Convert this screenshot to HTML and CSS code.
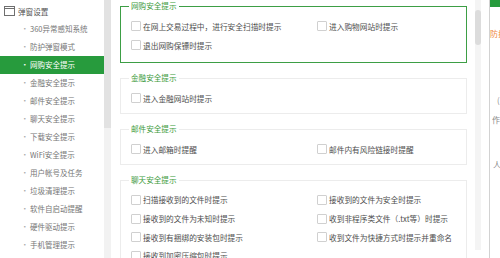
FILE: index.html
```html
<!DOCTYPE html>
<html lang="zh-CN">
<head>
<meta charset="utf-8">
<title>弹窗设置</title>
<link rel="stylesheet" href="styles.css">
</head>
<body>
<div class="app">
  <aside class="sidebar">
    <div class="nav-head">
      <svg class="nav-icon" viewBox="0 0 11 10" width="11" height="10"><rect x="0.5" y="0.5" width="10" height="9" fill="none" stroke="#6f6f6f" stroke-width="1"/><line x1="0.5" y1="2.5" x2="10.5" y2="2.5" stroke="#6f6f6f" stroke-width="1"/></svg>
      <span>弹窗设置</span>
    </div>
    <ul class="nav">
      <li>360异常感知系统</li>
      <li>防护弹窗模式</li>
      <li class="active">网购安全提示</li>
      <li>金融安全提示</li>
      <li>邮件安全提示</li>
      <li>聊天安全提示</li>
      <li>下载安全提示</li>
      <li>WiFi安全提示</li>
      <li>用户帐号及任务</li>
      <li>垃圾清理提示</li>
      <li>软件自启动提醒</li>
      <li>硬件驱动提示</li>
      <li>手机管理提示</li>
    </ul>
  </aside>
  <div class="side-scroll"><div class="side-thumb"></div></div>
  <main class="content">
    <fieldset class="group active">
      <legend>网购安全提示</legend>
      <div class="opts">
        <label class="opt"><span class="cb"></span>在网上交易过程中，进行安全扫描时提示</label>
        <label class="opt"><span class="cb"></span>进入购物网站时提示</label>
        <label class="opt"><span class="cb"></span>退出网购保镖时提示</label>
      </div>
    </fieldset>
    <fieldset class="group">
      <legend>金融安全提示</legend>
      <div class="opts">
        <label class="opt"><span class="cb"></span>进入金融网站时提示</label>
      </div>
    </fieldset>
    <fieldset class="group">
      <legend>邮件安全提示</legend>
      <div class="opts">
        <label class="opt"><span class="cb"></span>进入邮箱时提醒</label>
        <label class="opt"><span class="cb"></span>邮件内有风险链接时提醒</label>
      </div>
    </fieldset>
    <fieldset class="group chat">
      <legend>聊天安全提示</legend>
      <div class="opts">
        <label class="opt"><span class="cb"></span>扫描接收到的文件时提示</label>
        <label class="opt"><span class="cb"></span>接收到的文件为安全时提示</label>
        <label class="opt"><span class="cb"></span>接收到的文件为未知时提示</label>
        <label class="opt"><span class="cb"></span>收到非程序类文件（.txt等）时提示</label>
        <label class="opt"><span class="cb"></span>接收到有捆绑的安装包时提示</label>
        <label class="opt"><span class="cb"></span>收到文件为快捷方式时提示并重命名</label>
        <label class="opt"><span class="cb"></span>接收到加密压缩包时提示</label>
      </div>
    </fieldset>
  </main>
  <div class="main-scroll"><div class="main-thumb"></div></div>
  <div class="gutter"></div>
  <section class="right">
    <div class="right-bar"></div>
    <div class="right-title">防护</div>
    <div class="right-paren">(</div>
    <div class="right-line">作</div>
    <div class="right-line2">人</div>
  </section>
</div>
</body>
</html>
```

FILE: styles.css
```css
* { box-sizing: border-box; }
html, body { margin: 0; padding: 0; }
body {
  width: 500px;
  height: 258px;
  overflow: hidden;
  background: #fff;
  font-family: "Noto Sans CJK SC", "Noto Sans", sans-serif;
}
.app { display: flex; height: 258px; overflow: hidden; }

.sidebar { width: 104px; flex: none; padding-top: 2px; }
.nav-head {
  display: flex;
  align-items: center;
  height: 18px;
  padding-left: 4px;
  gap: 3px;
  font-size: 7.6px;
  color: #555;
}
.nav-icon { flex: none; }
.nav { list-style: none; margin: 0; padding: 0; }
.nav li {
  height: 18px;
  line-height: 18px;
  font-size: 7.5px;
  color: #767676;
  padding-left: 21px;
  white-space: nowrap;
}
.nav li::before {
  content: "·";
  display: inline-block;
  width: 9px;
  color: #aaa;
}
.nav li.active { background: #279b3d; color: #fff; }
.nav li.active::before { color: #fff; }

.side-scroll { width: 7px; flex: none; background: #f2f2f2; }
.side-thumb { height: 128px; background: #e2e2e2; }

.content { width: 364px; flex: none; padding: 0 8px 0 9px; }
.group {
  margin: 0 0 9px;
  padding: 4.5px 10px 5.5px;
  border: 1px solid #ececec;
  min-width: 0;
}
.group.active { border-color: #3d9e45; padding-bottom: 7.5px; }
.group legend {
  margin-left: -2px;
  padding: 0 2px;
  font-size: 7.6px;
  line-height: 12px;
  color: #3b9a3b;
}
.opts {
  display: grid;
  grid-template-columns: 186px 1fr;
  grid-auto-rows: 19px;
}
.chat .opts { grid-auto-rows: 18.7px; }
.opt {
  display: flex;
  align-items: center;
  font-size: 7.7px;
  color: #4d4d4d;
  white-space: nowrap;
}
.cb {
  width: 10px;
  height: 10px;
  flex: none;
  margin-right: 2px;
  border: 1px solid #d0d0d0;
  border-radius: 1px;
  background: #fff;
}

.main-scroll { width: 6px; flex: none; background: #f4f4f4; padding-top: 10px; height: 250px; }
.main-thumb { height: 35px; background: #dcdcdc; border-radius: 3px; }
.gutter { width: 8px; flex: none; }

.right {
  flex: 1;
  min-width: 0;
  overflow: hidden;
  border-left: 1px solid #d2d2d2;
  font-size: 8px;
  line-height: 9px;
  white-space: nowrap;
  color: #888;
}
.right-bar { height: 7px; background: #279b3d; }
.right-title { margin-top: 22px; color: #f0883e; }
.right-paren { margin-top: 57px; padding-left: 7px; }
.right-line { margin-top: 11px; padding-left: 2px; }
.right-line2 { margin-top: 36px; padding-left: 3px; }
```
